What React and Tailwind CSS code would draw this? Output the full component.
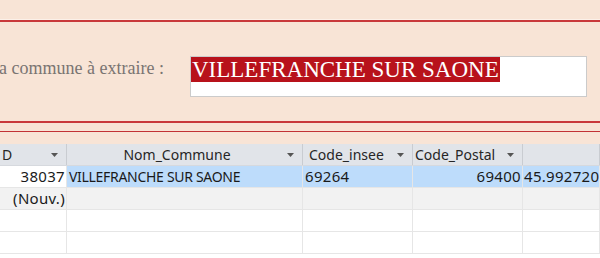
import React from "react";

const COLS = [
    { key: "id", label: "D", w: "w-[67px]", head: "pl-[2px]", text: "", cell: "justify-end pr-[1px]" },
    { key: "nom", label: "Nom_Commune", w: "w-[236px]", head: "", text: "flex-1 text-center", cell: "justify-start pl-[2px]" },
    { key: "insee", label: "Code_insee", w: "w-[110px]", head: "pl-[6px]", text: "", cell: "justify-start pl-[2px]" },
    { key: "postal", label: "Code_Postal", w: "w-[110px]", head: "pl-[2px]", text: "", cell: "justify-end pr-[1px]" },
    { key: "lat", label: "", w: "flex-1", head: "", text: "", cell: "justify-start pl-[1px]" },
];

const ROWS = [
    { bg: "bg-[#bddcfb]", values: ["38037", "VILLEFRANCHE SUR SAONE", "69264", "69400", "45.992720"] },
    { bg: "bg-[#f2f2f2]", values: ["(Nouv.)", "", "", "", ""] },
    { bg: "bg-white", values: ["", "", "", "", ""] },
    { bg: "bg-white", values: ["", "", "", "", ""] },
];

function Arrow() {
    return (
        <svg width="7" height="4" viewBox="0 0 7 4" className="shrink-0 ml-auto mr-[8px]">
            <path d="M0 0 L7 0 L3.5 4 Z" fill="#555" />
        </svg>
    );
}

export default function App() {
    return (
        <div className="w-[600px] h-[258px] overflow-hidden bg-white font-['Noto_Sans',sans-serif]">

            {/* Bandeau du formulaire */}
            <div className="h-[144px] bg-[#f8e4d6] flex flex-col">
                <div className="h-[19px]" />
                <div className="h-px bg-[#fcf1e9]" />
                <div className="h-[2px] bg-[#c9393b]" />

                <div className="h-[99px] flex items-start pt-[34px]">
                    <div className="w-[164px] shrink-0 flex justify-end overflow-hidden whitespace-nowrap pt-[3px]">
                        <span className="font-['Liberation_Serif',serif] text-[18px] text-[#7a7472] leading-none">
                            a commune à extraire :
                        </span>
                    </div>
                    <div className="ml-[26px] w-[397px] h-[41px] bg-white border border-[#cbcbcb] flex items-start">
                        <span className="bg-[#b8121b] text-white font-['Liberation_Serif',serif] text-[23px] leading-[25px] h-[25px] px-[1px] whitespace-nowrap">
                            VILLEFRANCHE SUR SAONE
                        </span>
                    </div>
                </div>

                <div className="h-[2px] bg-[#c9393b]" />
                <div className="h-[8px]" />
                <div className="h-px bg-[#c23236]" />
            </div>

            {/* Feuille de données */}
            <div className="flex flex-col text-[14px] text-[#1a1a1a]">
                <div className="flex h-[22px] bg-[#e1e4e9] border-b border-[#d6d9de]">
                    {COLS.map((c) => (
                        <div key={c.key} className={`${c.w} shrink-0 flex items-center border-r border-[#c9ccd1] ${c.head} text-[#262626] whitespace-nowrap overflow-hidden`}>
                            {c.label && <span className={c.text}>{c.label}</span>}
                            {c.label && <Arrow />}
                        </div>
                    ))}
                </div>
                {ROWS.map((r, i) => (
                    <div key={i} className={`flex h-[22px] ${r.bg} border-b border-[#e6e6e6]`}>
                        {COLS.map((c, j) => (
                            <div key={c.key} className={`${c.w} shrink-0 flex items-center border-r border-[#e6e6e6] ${c.cell} whitespace-nowrap overflow-hidden ${j === 0 && i === 0 ? "bg-white" : ""} ${j === 1 ? "text-[14px] tracking-[-0.3px]" : "text-[15px] tracking-[0.3px]"}`}>
                                {r.values[j]}
                            </div>
                        ))}
                    </div>
                ))}
            </div>
        </div>
    );
}
